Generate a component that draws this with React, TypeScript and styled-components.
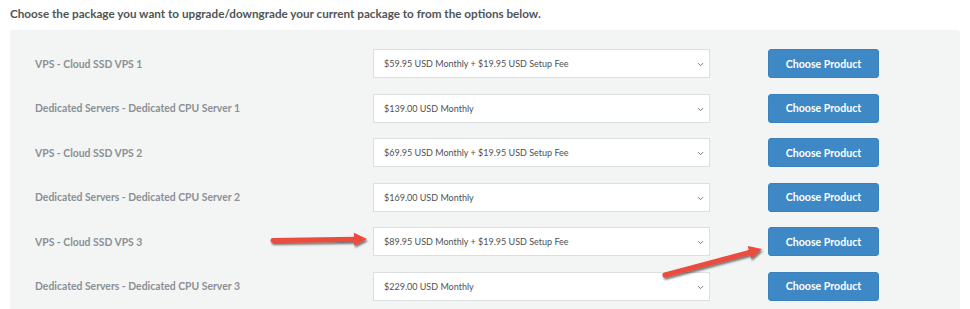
import React from 'react';
import styled, { createGlobalStyle } from 'styled-components';
import { ChevronDown } from 'lucide-react';

const GlobalStyle = createGlobalStyle`
  html, body {
    margin: 0;
    padding: 0;
    background: #ffffff;
    font-family: Lato, 'Open Sans', Arial, sans-serif;
  }
`;

const Page = styled.div`
  position: relative;
  width: 970px;
  height: 309px;
  overflow: hidden;
  padding: 6px 10px 0 10px;
  box-sizing: border-box;
`;

const Heading = styled.p`
  margin: 0 0 9px 0;
  font-size: 11.7px;
  font-weight: 700;
  color: #505457;
  line-height: 15px;
`;

const Panel = styled.div`
  width: 950px;
  background: #f3f4f4;
  border-radius: 3px;
  padding: 19px 0 20px 25px;
  box-sizing: border-box;
  display: grid;
  grid-template-columns: 338px 337px 58px 111px;
  grid-auto-rows: 29px;
  row-gap: 15.6px;
  align-items: center;
`;

const Label = styled.div`
  font-size: 10.4px;
  font-weight: 700;
  color: #8b9095;
`;

const SelectBox = styled.div`
  position: relative;
  height: 29px;
  background: #ffffff;
  border: 1px solid #dcdfe1;
  box-sizing: border-box;
  display: flex;
  align-items: center;
  padding-left: 10px;
  font-size: 9px;
  color: #4d5154;
`;

const Chevron = styled(ChevronDown)`
  position: absolute;
  right: 4px;
  top: 10px;
  color: #6b6f72;
`;

const Button = styled.button`
  grid-column: 4;
  height: 29px;
  border: 1px solid #3a82bd;
  border-radius: 3px;
  background: #3e88c5;
  color: #ffffff;
  font-family: inherit;
  font-size: 10.6px;
  font-weight: 700;
  padding: 0;
`;

const Overlay = styled.svg`
  position: absolute;
  left: 0;
  top: 0;
  pointer-events: none;
`;

const packages = [
  { name: 'VPS - Cloud SSD VPS 1', price: '$59.95 USD Monthly + $19.95 USD Setup Fee' },
  { name: 'Dedicated Servers - Dedicated CPU Server 1', price: '$139.00 USD Monthly' },
  { name: 'VPS - Cloud SSD VPS 2', price: '$69.95 USD Monthly + $19.95 USD Setup Fee' },
  { name: 'Dedicated Servers - Dedicated CPU Server 2', price: '$169.00 USD Monthly' },
  { name: 'VPS - Cloud SSD VPS 3', price: '$89.95 USD Monthly + $19.95 USD Setup Fee' },
  { name: 'Dedicated Servers - Dedicated CPU Server 3', price: '$229.00 USD Monthly' },
];

const Arrow = ({ x1, y1, x2, y2 }: { x1: number; y1: number; x2: number; y2: number }) => {
  const ang = Math.atan2(y2 - y1, x2 - x1);
  const len = 13;
  const half = 6.5;
  const bx = x2 - Math.cos(ang) * len;
  const by = y2 - Math.sin(ang) * len;
  const px = -Math.sin(ang) * half;
  const py = Math.cos(ang) * half;
  return (
    <g filter="url(#shadow)">
      <line x1={x1} y1={y1} x2={bx + Math.cos(ang) * 2} y2={by + Math.sin(ang) * 2} stroke="#ec4b3c" strokeWidth={5} strokeLinecap="round" />
      <polygon points={`${x2},${y2} ${bx + px},${by + py} ${bx - px},${by - py}`} fill="#ec4b3c" />
    </g>
  );
};

export default function App() {
  return (
    <>
      <GlobalStyle />
      <Page>
        <Heading>Choose the package you want to upgrade/downgrade your current package to from the options below.</Heading>
        <Panel>
          {packages.map((p) => (
            <React.Fragment key={p.name}>
              <Label>{p.name}</Label>
              <SelectBox>
                {p.price}
                <Chevron size={9} strokeWidth={2.5} />
              </SelectBox>
              <Button>Choose Product</Button>
            </React.Fragment>
          ))}
        </Panel>
        <Overlay width={970} height={309}>
          <defs>
            <filter id="shadow" x="-20%" y="-50%" width="140%" height="200%">
              <feDropShadow dx="1" dy="2" stdDeviation="1.2" floodColor="#000" floodOpacity="0.55" />
            </filter>
          </defs>
          <Arrow x1={273} y1={240.5} x2={367} y2={239} />
          <Arrow x1={665} y1={275} x2={762} y2={249} />
        </Overlay>
      </Page>
    </>
  );
}
